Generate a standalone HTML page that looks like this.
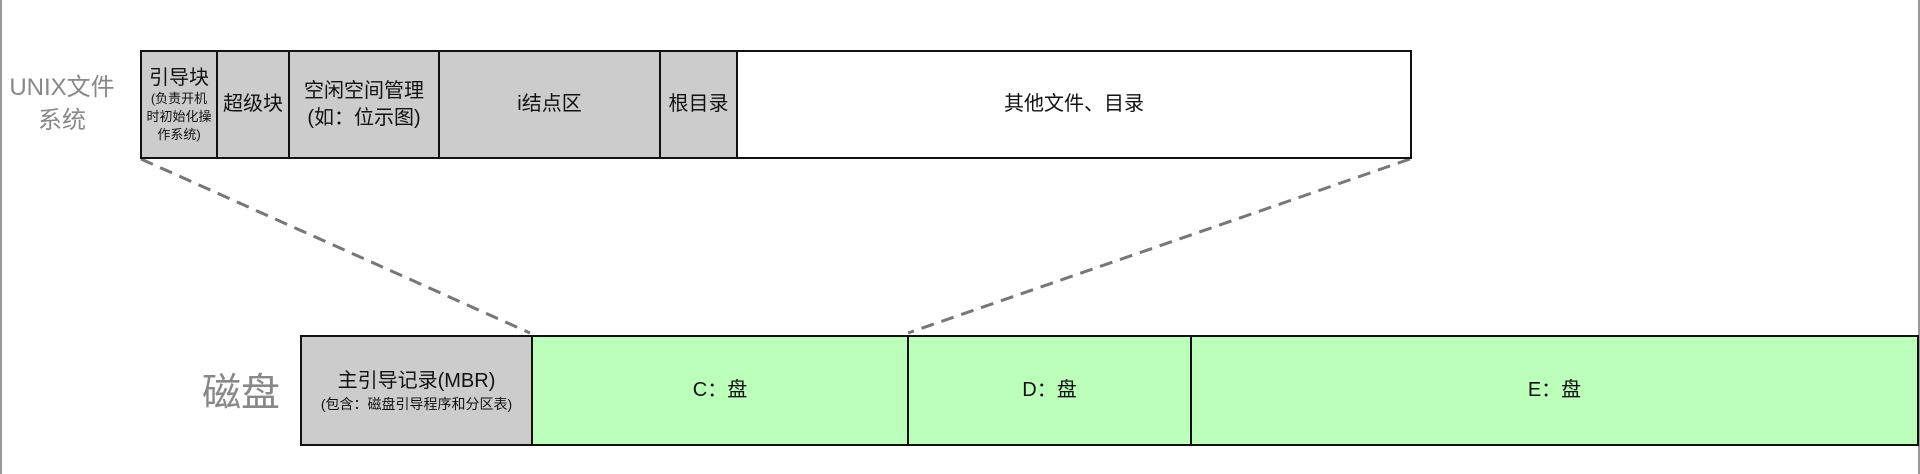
<!DOCTYPE html>
<html><head><meta charset="utf-8"><style>
body{margin:0;width:1920px;height:474px;background:#fff;position:relative;overflow:hidden;font-family:"Liberation Sans","Noto Sans CJK SC",sans-serif;}
.c{position:absolute;box-sizing:border-box;border:2px solid #111;display:flex;flex-direction:column;align-items:center;justify-content:center;text-align:center;color:#111;font-size:20px;line-height:27px}
.g{background:#cccccc}.gr{background:#bbffbb}.w{background:#fff}
.s{font-size:14px;line-height:19px}
.lbl{position:absolute;color:#888;text-align:center}
</style></head><body>
<div style="position:absolute;left:0;top:0;width:2px;height:474px;background:#999"></div>
<div style="position:absolute;left:1918px;top:0;width:2px;height:474px;background:#999"></div>
<svg width="1920" height="474" style="position:absolute;left:0;top:0">
<line x1="141" y1="159" x2="530" y2="333" stroke="#777" stroke-width="3" stroke-dasharray="13,8"/>
<line x1="1410" y1="159" x2="908" y2="333" stroke="#777" stroke-width="3" stroke-dasharray="13,8"/>
</svg>
<div class="lbl" style="left:0;width:124px;top:71px;font-size:24px;line-height:33px">UNIX文件<br>系统</div>
<div class="lbl" style="left:202px;top:369px;font-size:39px;line-height:50px">磁盘</div>
<div class="c g" style="left:140px;top:50px;width:78px;height:109px"><div style="font-size:20px;line-height:24px">引导块</div><div class="s" style="font-size:13px;line-height:18px">(负责开机<br>时初始化操<br>作系统)</div></div>
<div class="c g" style="left:216px;top:50px;width:74px;height:109px">超级块</div>
<div class="c g" style="left:288px;top:50px;width:152px;height:109px">空闲空间管理<br>(如：位示图)</div>
<div class="c g" style="left:438px;top:50px;width:223px;height:109px">i结点区</div>
<div class="c g" style="left:659px;top:50px;width:79px;height:109px">根目录</div>
<div class="c w" style="left:736px;top:50px;width:676px;height:109px">其他文件、目录</div>
<div class="c g" style="left:300px;top:335px;width:233px;height:111px"><div>主引导记录(MBR)</div><div class="s">(包含：磁盘引导程序和分区表)</div></div>
<div class="c gr" style="left:531px;top:335px;width:378px;height:111px">C：盘</div>
<div class="c gr" style="left:907px;top:335px;width:285px;height:111px">D：盘</div>
<div class="c gr" style="left:1190px;top:335px;width:729px;height:111px">E：盘</div>
</body></html>
